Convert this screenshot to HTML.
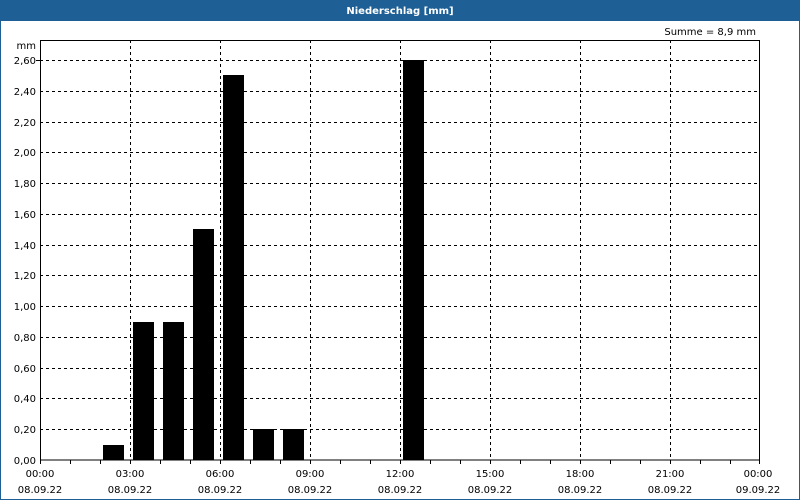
<!DOCTYPE html>
<html><head><meta charset="utf-8"><style>
html,body{margin:0;padding:0;background:#fff;width:800px;height:500px;overflow:hidden}
svg text{font-family:"DejaVu Sans","Liberation Sans",sans-serif;font-size:10px;fill:#000}
</style></head><body>
<svg width="800" height="500" xmlns="http://www.w3.org/2000/svg">
<rect x="0" y="0" width="800" height="500" fill="#fff"/>
<rect x="0.5" y="0.5" width="799" height="499" fill="none" stroke="#1e6096" stroke-width="1"/>
<rect x="0" y="0" width="800" height="21" fill="#1e6096"/>
<text x="400" y="14" text-anchor="middle" style="fill:#fff;font-weight:bold;font-size:10px">Niederschlag [mm]</text>
<text x="756" y="35" text-anchor="end">Summe = 8,9 mm</text>
<text x="36" y="49" text-anchor="end">mm</text>
<g stroke="#000" stroke-width="1" stroke-dasharray="3,3">
<line x1="40" y1="60.5" x2="760" y2="60.5"/>
<line x1="40" y1="91.5" x2="760" y2="91.5"/>
<line x1="40" y1="122.5" x2="760" y2="122.5"/>
<line x1="40" y1="152.5" x2="760" y2="152.5"/>
<line x1="40" y1="183.5" x2="760" y2="183.5"/>
<line x1="40" y1="214.5" x2="760" y2="214.5"/>
<line x1="40" y1="245.5" x2="760" y2="245.5"/>
<line x1="40" y1="275.5" x2="760" y2="275.5"/>
<line x1="40" y1="306.5" x2="760" y2="306.5"/>
<line x1="40" y1="337.5" x2="760" y2="337.5"/>
<line x1="40" y1="368.5" x2="760" y2="368.5"/>
<line x1="40" y1="398.5" x2="760" y2="398.5"/>
<line x1="40" y1="429.5" x2="760" y2="429.5"/>
<line x1="130.5" y1="40" x2="130.5" y2="460"/>
<line x1="220.5" y1="40" x2="220.5" y2="460"/>
<line x1="310.5" y1="40" x2="310.5" y2="460"/>
<line x1="400.5" y1="40" x2="400.5" y2="460"/>
<line x1="490.5" y1="40" x2="490.5" y2="460"/>
<line x1="580.5" y1="40" x2="580.5" y2="460"/>
<line x1="670.5" y1="40" x2="670.5" y2="460"/>
</g>
<g fill="#000">
<rect x="103" y="445" width="21" height="15"/>
<rect x="133" y="322" width="21" height="138"/>
<rect x="163" y="322" width="21" height="138"/>
<rect x="193" y="229" width="21" height="231"/>
<rect x="223" y="75" width="21" height="385"/>
<rect x="253" y="429" width="21" height="31"/>
<rect x="283" y="429" width="21" height="31"/>
<rect x="403" y="60" width="21" height="400"/>
</g>
<rect x="40.5" y="40.5" width="719" height="419.5" fill="none" stroke="#000" stroke-width="1"/>
<g stroke="#000" stroke-width="1">
<line x1="40.5" y1="460" x2="40.5" y2="464"/><line x1="70.5" y1="460" x2="70.5" y2="464"/><line x1="100.5" y1="460" x2="100.5" y2="464"/><line x1="130.5" y1="460" x2="130.5" y2="464"/><line x1="160.5" y1="460" x2="160.5" y2="464"/><line x1="190.5" y1="460" x2="190.5" y2="464"/><line x1="220.5" y1="460" x2="220.5" y2="464"/><line x1="250.5" y1="460" x2="250.5" y2="464"/><line x1="280.5" y1="460" x2="280.5" y2="464"/><line x1="310.5" y1="460" x2="310.5" y2="464"/><line x1="340.5" y1="460" x2="340.5" y2="464"/><line x1="370.5" y1="460" x2="370.5" y2="464"/><line x1="400.5" y1="460" x2="400.5" y2="464"/><line x1="430.5" y1="460" x2="430.5" y2="464"/><line x1="460.5" y1="460" x2="460.5" y2="464"/><line x1="490.5" y1="460" x2="490.5" y2="464"/><line x1="520.5" y1="460" x2="520.5" y2="464"/><line x1="550.5" y1="460" x2="550.5" y2="464"/><line x1="580.5" y1="460" x2="580.5" y2="464"/><line x1="610.5" y1="460" x2="610.5" y2="464"/><line x1="640.5" y1="460" x2="640.5" y2="464"/><line x1="670.5" y1="460" x2="670.5" y2="464"/><line x1="700.5" y1="460" x2="700.5" y2="464"/><line x1="730.5" y1="460" x2="730.5" y2="464"/><line x1="759.5" y1="460" x2="759.5" y2="464"/>
<line x1="36" y1="60.5" x2="40" y2="60.5"/>
</g>
<g text-anchor="end">
<text x="36" y="64">2,60</text><text x="36" y="95">2,40</text><text x="36" y="126">2,20</text><text x="36" y="156">2,00</text><text x="36" y="187">1,80</text><text x="36" y="218">1,60</text><text x="36" y="249">1,40</text><text x="36" y="279">1,20</text><text x="36" y="310">1,00</text><text x="36" y="341">0,80</text><text x="36" y="372">0,60</text><text x="36" y="402">0,40</text><text x="36" y="433">0,20</text><text x="36" y="464">0,00</text>
</g>
<g text-anchor="middle">
<text x="40" y="477">00:00</text><text x="40" y="493">08.09.22</text>
<text x="130" y="477">03:00</text><text x="130" y="493">08.09.22</text>
<text x="220" y="477">06:00</text><text x="220" y="493">08.09.22</text>
<text x="310" y="477">09:00</text><text x="310" y="493">08.09.22</text>
<text x="400" y="477">12:00</text><text x="400" y="493">08.09.22</text>
<text x="490" y="477">15:00</text><text x="490" y="493">08.09.22</text>
<text x="580" y="477">18:00</text><text x="580" y="493">08.09.22</text>
<text x="670" y="477">21:00</text><text x="670" y="493">08.09.22</text>
<text x="758" y="477">00:00</text><text x="758" y="493">09.09.22</text>
</g>
</svg>
</body></html>
